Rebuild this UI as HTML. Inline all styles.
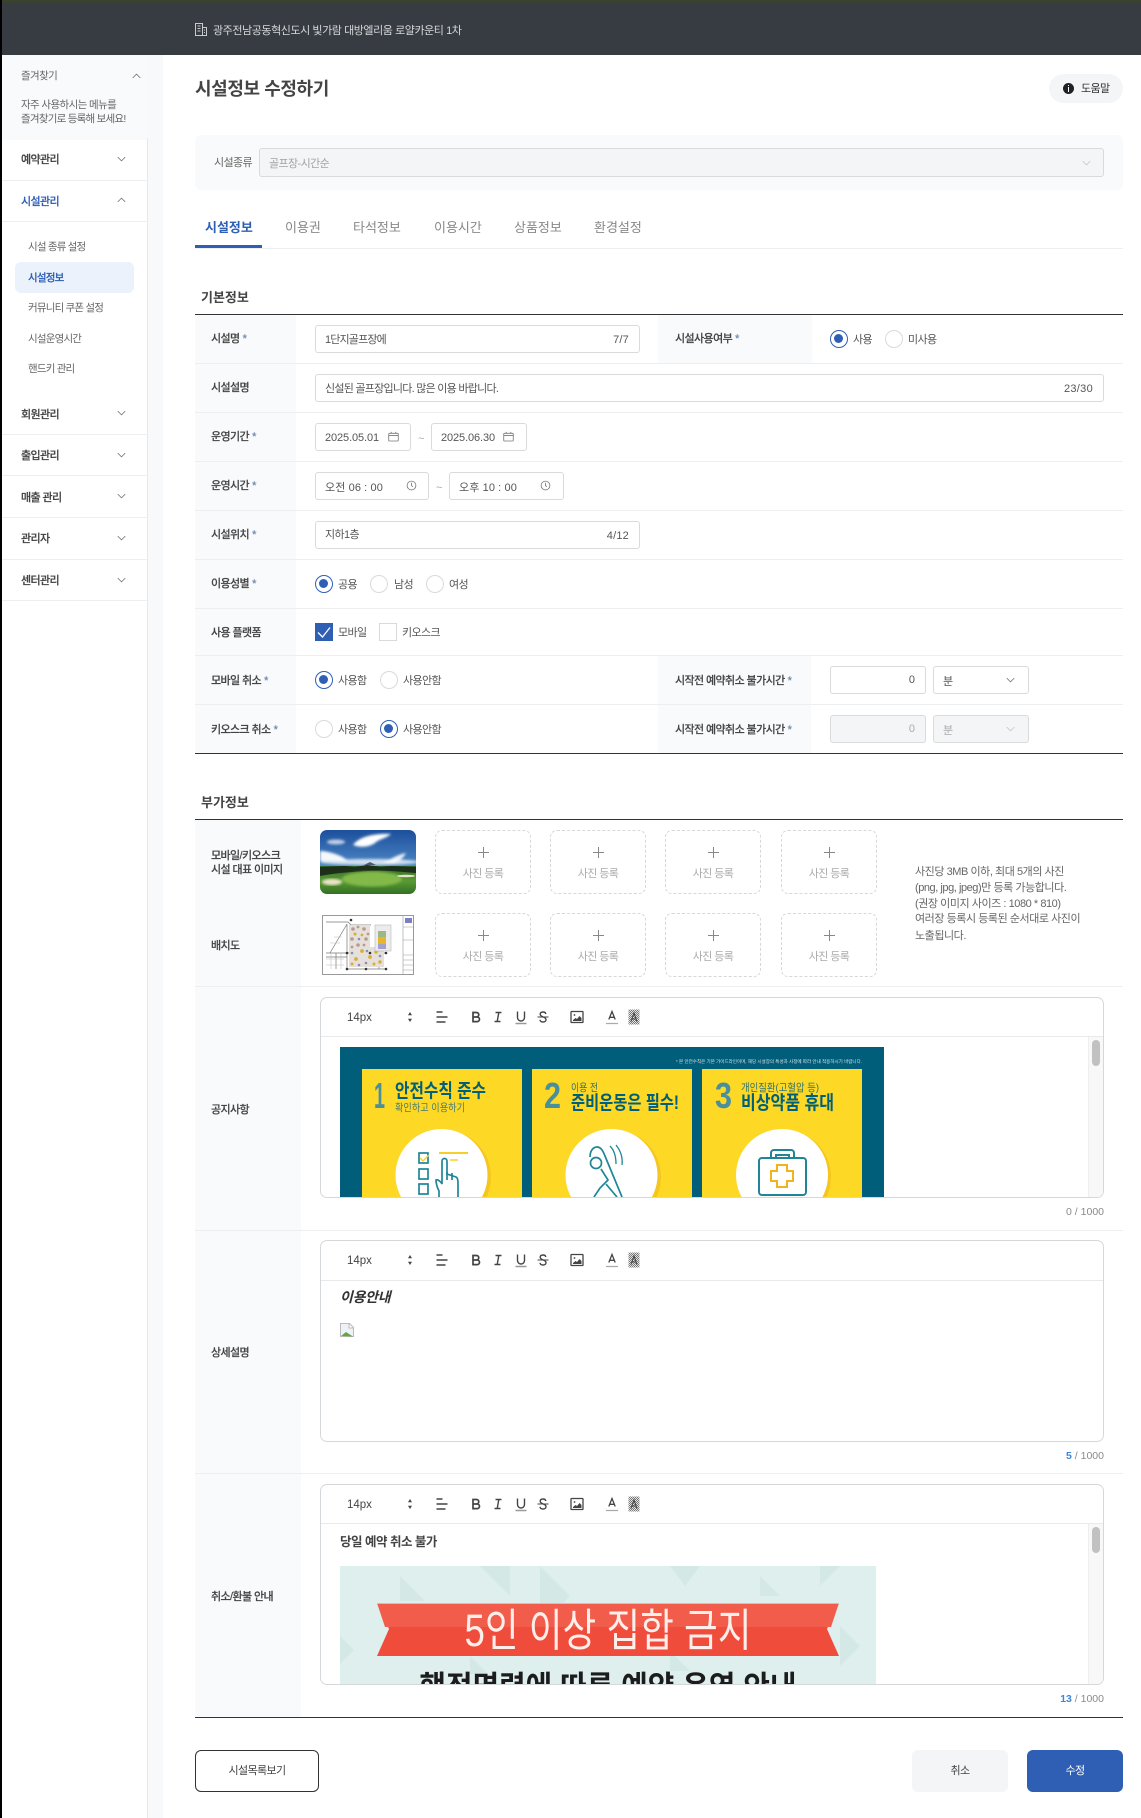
<!DOCTYPE html>
<html lang="ko"><head><meta charset="utf-8"><title>시설정보 수정하기</title>
<style>
html,body{margin:0;padding:0;background:#fff}
body{width:1141px;height:1818px;position:relative;overflow:hidden;font-family:"Liberation Sans","Noto Sans CJK KR",sans-serif;font-size:11px;color:#555;letter-spacing:-.6px;filter:blur(.3px)}
div,span,svg{position:absolute;box-sizing:border-box}
.t{height:20px;line-height:20px;white-space:nowrap;margin-top:1px}
.z{margin-top:0}
.r{text-align:right}
.lb{color:#444;font-weight:500;-webkit-text-stroke:.15px #444}
.lb i{color:#6f9ce0;font-style:normal;margin-left:3px}
.nav{color:#444;font-size:11px;font-weight:500;-webkit-text-stroke:.2px #444;left:21px}
.sub{color:#666;left:28px;font-size:10.5px;letter-spacing:-.8px}
.ln{height:1px;background:#eceeef}
.lc{background:#f8fafb}
.in{border:1px solid #d8dadc;border-radius:3px;background:#fff;height:28px}
.dis{background:#f3f5f6}
.ra{width:18px;height:18px;border-radius:50%;border:1px solid #d8dadc;background:#fff}
.on{border:1.5px solid #2f5fb5}
.on:after{content:"";position:absolute;left:3px;top:3px;width:9px;height:9px;border-radius:50%;background:#2f5fb5}
.tab{top:217px;color:#888;font-size:13px;letter-spacing:0}
.ph{width:96px;height:64px;border:1px dashed #d5d8da;border-radius:7px;background:#fff}
.ph b{position:absolute;left:0;right:0;top:33px;text-align:center;font-weight:400;color:#aaa;line-height:20px;font-size:11px}
.ph svg{left:41px;top:15px}
.ed{left:320px;width:784px;border:1px solid #d5d8da;border-radius:7px;background:#fff;overflow:hidden}
.tb{left:0;right:0;top:0;height:40px;border-bottom:1px solid #e8e9ea}
.tb span{top:10px;margin-top:0}
.tb svg{top:10px;width:18px;height:18px;fill:none;stroke:#444;stroke-width:1.4}
.cnt{color:#8a8a8a;font-size:10.5px;letter-spacing:0;margin-top:0}
.hp{color:#666;letter-spacing:-.45px}
</style></head><body>
<svg width="0" height="0" style="position:absolute">
<defs><pattern id="chk" width="2" height="2" patternUnits="userSpaceOnUse"><rect width="2" height="2" fill="#e4e4e4"/><rect width="1" height="1" fill="#777"/><rect x="1" y="1" width="1" height="1" fill="#777"/></pattern></defs>
<symbol id="cd" viewBox="0 0 12 7"><path d="M1 1l5 5 5-5" fill="none" stroke="#666" stroke-width="1"/></symbol>
<symbol id="cu" viewBox="0 0 12 7"><path d="M1 6l5-5 5 5" fill="none" stroke="#666" stroke-width="1"/></symbol>
<symbol id="cal" viewBox="0 0 12 12"><path d="M1.5 2.5h9a.7.7 0 0 1 .7.7v7a.7.7 0 0 1-.7.7h-9a.7.7 0 0 1-.7-.7v-7a.7.7 0 0 1 .7-.7zM.8 5h10.4M3.5 1v2M8.5 1v2" fill="none" stroke="#777" stroke-width=".9"/></symbol>
<symbol id="clk" viewBox="0 0 12 12"><circle cx="6" cy="6" r="4.8" fill="none" stroke="#777" stroke-width=".9"/><path d="M6 3v3.2l1.6 1" fill="none" stroke="#777" stroke-width=".9"/></symbol>
<symbol id="pl" viewBox="0 0 13 13"><path d="M6.5 1v11M1 6.5h11" fill="none" stroke="#888" stroke-width="1"/></symbol>
<symbol id="bB" viewBox="0 0 18 18"><path d="M6 4.5H9.5A2.2 2.2 0 0 1 9.5 9H6zM6 9H10.2A2.3 2.3 0 0 1 10.2 13.6H6z" stroke-width="1.7"/></symbol>
<symbol id="bI" viewBox="0 0 18 18"><path d="M6.5 4.5h6M5.5 13.5h6M9.8 4.5L8.2 13.5"/></symbol>
<symbol id="bU" viewBox="0 0 18 18"><path d="M5.5 3.5v6a3.5 3.5 0 0 0 7 0v-6"/><path d="M3.5 15.5h11" stroke="#999"/></symbol>
<symbol id="bS" viewBox="0 0 18 18"><path d="M3.5 9h11" stroke-width="1.1"/><path d="M11.8 6C11.6 4.6 10.5 4 9 4 7.3 4 6.2 4.9 6.2 6.3c0 1.4 1.3 2 2.8 2.6 1.7.6 3 1.2 3 2.7 0 1.4-1.2 2.4-3 2.4-1.6 0-2.8-.7-3-2.2"/></symbol>
<symbol id="bP" viewBox="0 0 18 18"><rect x="3" y="3.5" width="12" height="11" rx=".6" stroke-width="1.3"/><circle cx="6.5" cy="7" r=".9" fill="#444" stroke="none"/><path d="M5 13v-1l2.5-2 1.5 1 2.5-3 2 2v3z" fill="#444" stroke="none"/></symbol>
<symbol id="bA" viewBox="0 0 18 18"><path d="M5.8 11.5L9 3.5l3.2 8M6.8 9.3h4.4" stroke-width="1.3"/><path d="M3 15.5h12" stroke="#aaa" stroke-width="1.2"/></symbol>
<symbol id="bG" viewBox="0 0 18 18"><rect x="3.5" y="1.5" width="11" height="15" fill="url(#chk)" stroke="none"/><path d="M6 13.5L9 5l3 8.5M6.9 11h4.2" stroke-width="1.1"/></symbol>
<symbol id="bL" viewBox="0 0 18 18"><path d="M3.5 4h6M3.5 9h11M3.5 14h9"/></symbol>
<symbol id="bO" viewBox="0 0 18 18"><path d="M9 4L7 7.2h4zM9 14l-2-3.2h4z" fill="#444" stroke="none"/></symbol>
</svg>

<!-- top bar -->
<div style="left:0;top:0;width:1141px;height:55px;background:#373c42"></div>
<div style="left:0;top:0;width:1141px;height:3px;background:#39422f"></div>
<svg style="left:195px;top:23px" width="12" height="13" viewBox="0 0 12 13"><path d="M.5 12.5V.5h7v12M7.5 4.5h4v8M0 12.5h12M2.5 3h3M2.5 5.5h3M2.5 8h3M9 7h1M9 9.5h1" fill="none" stroke="#c9ccce"/></svg>
<div class="t" style="left:213px;top:20px;color:#d6d8da;letter-spacing:-.44px">광주전남공동혁신도시 빛가람 대방엘리움 로얄카운티 1차</div>

<!-- sidebar -->
<div style="left:2px;top:55px;width:160px;height:85px;background:#f8fafb"></div>
<div style="left:147px;top:55px;width:16px;height:1763px;background:#f8f9fa"></div>
<div style="left:147px;top:138px;width:1px;height:1680px;background:#e6e8ea"></div>
<div class="t z" style="left:21px;top:66px;color:#666;font-size:10.5px">즐겨찾기</div>
<svg style="left:132px;top:73px" width="9" height="6"><use href="#cu"/></svg>
<div class="t z" style="left:21px;top:95px;color:#666;font-size:10.5px">자주 사용하시는 메뉴를</div>
<div class="t" style="left:21px;top:108px;color:#666;font-size:10.5px;letter-spacing:-.75px">즐겨찾기로 등록해 보세요!</div>
<div class="t nav" style="top:149px">예약관리</div>
<div class="t nav" style="top:191px;color:#2f5fb5;-webkit-text-stroke-color:#2f5fb5">시설관리</div>
<div class="t sub" style="top:236px">시설 종류 설정</div>
<div style="left:15px;top:262px;width:119px;height:31px;border-radius:6px;background:#ebf2fc"></div>
<div class="t sub" style="top:267px;color:#2f5fb5;font-weight:500;-webkit-text-stroke:.2px #2f5fb5">시설정보</div>
<div class="t sub" style="top:297px">커뮤니티 쿠폰 설정</div>
<div class="t sub" style="top:328px">시설운영시간</div>
<div class="t sub" style="top:358px">핸드키 관리</div>
<div class="t nav" style="top:404px">회원관리</div>
<div class="t nav" style="top:445px">출입관리</div>
<div class="t nav" style="top:487px">매출 관리</div>
<div class="t nav" style="top:528px">관리자</div>
<div class="t nav" style="top:570px">센터관리</div>
<div class="ln" style="left:2px;top:180px;width:145px"></div>
<div class="ln" style="left:2px;top:221px;width:145px"></div>
<div class="ln" style="left:2px;top:434px;width:145px"></div>
<div class="ln" style="left:2px;top:475px;width:145px"></div>
<div class="ln" style="left:2px;top:517px;width:145px"></div>
<div class="ln" style="left:2px;top:559px;width:145px"></div>
<div class="ln" style="left:2px;top:600px;width:145px"></div>
<svg style="left:117px;top:156px" width="9" height="6"><use href="#cd"/></svg>
<svg style="left:117px;top:197px" width="9" height="6"><use href="#cu"/></svg>
<svg style="left:117px;top:410px" width="9" height="6"><use href="#cd"/></svg>
<svg style="left:117px;top:452px" width="9" height="6"><use href="#cd"/></svg>
<svg style="left:117px;top:493px" width="9" height="6"><use href="#cd"/></svg>
<svg style="left:117px;top:535px" width="9" height="6"><use href="#cd"/></svg>
<svg style="left:117px;top:577px" width="9" height="6"><use href="#cd"/></svg>
<div style="left:0;top:0;width:2px;height:1818px;background:#000"></div>

<!-- header -->
<div class="t" style="left:195px;top:78px;font-size:18px;font-weight:700;color:#444;letter-spacing:-.4px">시설정보 수정하기</div>
<div style="left:1049px;top:74px;width:74px;height:29px;border-radius:15px;background:#f3f5f6"></div>
<div style="left:1063px;top:83px;width:11px;height:11px;border-radius:50%;background:#1f2226"></div>
<div style="left:1068px;top:87px;width:1.4px;height:5px;background:#fff"></div>
<div style="left:1068px;top:85px;width:1.4px;height:1.3px;background:#fff"></div>
<div class="t" style="left:1081px;top:78px;color:#333">도움말</div>

<!-- facility type -->
<div style="left:195px;top:135px;width:928px;height:55px;border-radius:6px;background:#f8fafb"></div>
<div class="in dis" style="left:259px;top:148px;width:845px;height:29px"></div>
<div class="t" style="left:214px;top:152px;color:#666">시설종류</div>
<div class="t" style="left:269px;top:153px;color:#a0a3a6">골프장-시간순</div>
<svg style="left:1082px;top:160px" width="9" height="6"><use href="#cd" opacity=".35"/></svg>

<!-- tabs -->
<div class="t tab" style="left:205px;color:#2f5fb5;font-weight:700">시설정보</div>
<div class="t tab" style="left:285px">이용권</div>
<div class="t tab" style="left:353px">타석정보</div>
<div class="t tab" style="left:434px">이용시간</div>
<div class="t tab" style="left:514px">상품정보</div>
<div class="t tab" style="left:594px">환경설정</div>
<div class="ln" style="left:195px;top:248px;width:928px"></div>
<div style="left:195px;top:245px;width:67px;height:3px;background:#2f5fb5"></div>

<!-- basic info -->
<div class="t" style="left:201px;top:287px;font-size:13px;font-weight:700;color:#444;letter-spacing:0">기본정보</div>
<div class="lc" style="left:195px;top:315px;width:101px;height:438px"></div>
<div class="lc" style="left:658px;top:315px;width:154px;height:48px"></div>
<div class="lc" style="left:658px;top:656px;width:153px;height:97px"></div>
<div class="ln" style="left:195px;top:363px;width:928px"></div>
<div class="ln" style="left:195px;top:412px;width:928px"></div>
<div class="ln" style="left:195px;top:461px;width:928px"></div>
<div class="ln" style="left:195px;top:510px;width:928px"></div>
<div class="ln" style="left:195px;top:559px;width:928px"></div>
<div class="ln" style="left:195px;top:608px;width:928px"></div>
<div class="ln" style="left:195px;top:655px;width:928px"></div>
<div class="ln" style="left:195px;top:704px;width:928px"></div>
<div style="left:195px;top:314px;width:928px;height:1px;background:#333"></div>
<div style="left:195px;top:753px;width:928px;height:1px;background:#333"></div>

<div class="t lb" style="left:211px;top:328px">시설명<i>*</i></div>
<div class="t lb" style="left:211px;top:377px">시설설명</div>
<div class="t lb" style="left:211px;top:426px">운영기간<i>*</i></div>
<div class="t lb" style="left:211px;top:475px">운영시간<i>*</i></div>
<div class="t lb" style="left:211px;top:524px">시설위치<i>*</i></div>
<div class="t lb" style="left:211px;top:573px">이용성별<i>*</i></div>
<div class="t lb" style="left:211px;top:622px">사용 플랫폼</div>
<div class="t lb" style="left:211px;top:670px">모바일 취소<i>*</i></div>
<div class="t lb" style="left:211px;top:719px">키오스크 취소<i>*</i></div>
<div class="t lb" style="left:675px;top:328px">시설사용여부<i>*</i></div>
<div class="t lb" style="left:675px;top:670px">시작전 예약취소 불가시간<i>*</i></div>
<div class="t lb" style="left:675px;top:719px">시작전 예약취소 불가시간<i>*</i></div>

<div class="in" style="left:315px;top:325px;width:325px"></div>
<div class="t" style="left:325px;top:329px;letter-spacing:-.85px">1단지골프장에</div>
<div class="t r" style="right:512px;top:329px;letter-spacing:.2px">7/7</div>
<div class="ra on" style="left:830px;top:330px"></div><div class="t" style="left:853px;top:329px">사용</div>
<div class="ra" style="left:885px;top:330px"></div><div class="t" style="left:908px;top:329px">미사용</div>

<div class="in" style="left:315px;top:374px;width:789px"></div>
<div class="t" style="left:325px;top:378px;letter-spacing:-.75px">신설된 골프장입니다. 많은 이용 바랍니다.</div>
<div class="t r" style="right:48px;top:378px;letter-spacing:.3px">23/30</div>

<div class="in" style="left:315px;top:423px;width:96px"></div>
<div class="t" style="left:325px;top:427px;letter-spacing:-.1px">2025.05.01</div>
<svg style="left:388px;top:431px" width="11" height="11"><use href="#cal"/></svg>
<div class="t" style="left:418px;top:428px;color:#aaa">~</div>
<div class="in" style="left:431px;top:423px;width:96px"></div>
<div class="t" style="left:441px;top:427px;letter-spacing:-.1px">2025.06.30</div>
<svg style="left:503px;top:431px" width="11" height="11"><use href="#cal"/></svg>

<div class="in" style="left:315px;top:472px;width:114px"></div>
<div class="t" style="left:325px;top:477px;letter-spacing:.1px">오전 06 : 00</div>
<svg style="left:406px;top:480px" width="11" height="11"><use href="#clk"/></svg>
<div class="t" style="left:436px;top:477px;color:#aaa">~</div>
<div class="in" style="left:449px;top:472px;width:115px"></div>
<div class="t" style="left:459px;top:477px;letter-spacing:.1px">오후 10 : 00</div>
<svg style="left:540px;top:480px" width="11" height="11"><use href="#clk"/></svg>

<div class="in" style="left:315px;top:521px;width:325px"></div>
<div class="t" style="left:325px;top:524px">지하1층</div>
<div class="t r" style="right:512px;top:525px;letter-spacing:.2px">4/12</div>

<div class="ra on" style="left:315px;top:575px"></div><div class="t" style="left:338px;top:574px">공용</div>
<div class="ra" style="left:370px;top:575px"></div><div class="t" style="left:394px;top:574px">남성</div>
<div class="ra" style="left:426px;top:575px"></div><div class="t" style="left:449px;top:574px">여성</div>

<div style="left:315px;top:623px;width:18px;height:18px;background:#2f5fb5"></div>
<svg style="left:315px;top:623px" width="18" height="18"><path d="M3 9.5l4.5 4.5L15 4.5" fill="none" stroke="#fff" stroke-width="1.3"/></svg>
<div class="t" style="left:338px;top:622px">모바일</div>
<div style="left:379px;top:623px;width:18px;height:18px;border:1px solid #d8dadc"></div>
<div class="t" style="left:402px;top:622px">키오스크</div>

<div class="ra on" style="left:315px;top:671px"></div><div class="t" style="left:338px;top:670px">사용함</div>
<div class="ra" style="left:380px;top:671px"></div><div class="t" style="left:403px;top:670px">사용안함</div>
<div class="ra" style="left:315px;top:720px"></div><div class="t" style="left:338px;top:719px">사용함</div>
<div class="ra on" style="left:380px;top:720px"></div><div class="t" style="left:403px;top:719px">사용안함</div>

<div class="in" style="left:830px;top:666px;width:96px"></div>
<div class="t r" style="right:226px;top:669px;letter-spacing:0">0</div>
<div class="in" style="left:933px;top:666px;width:96px"></div>
<div class="t" style="left:943px;top:671px">분</div>
<svg style="left:1006px;top:677px" width="9" height="6"><use href="#cd"/></svg>
<div class="in dis" style="left:830px;top:715px;width:96px"></div>
<div class="t r" style="right:226px;top:718px;letter-spacing:0;color:#aaa">0</div>
<div class="in dis" style="left:933px;top:715px;width:96px"></div>
<div class="t" style="left:943px;top:720px;color:#aaa">분</div>
<svg style="left:1006px;top:726px" width="9" height="6"><use href="#cd" opacity=".35"/></svg>

<!-- additional -->
<div class="t" style="left:201px;top:792px;font-size:13px;font-weight:700;color:#444;letter-spacing:0">부가정보</div>
<div class="lc" style="left:195px;top:820px;width:106px;height:897px"></div>
<div class="ln" style="left:195px;top:986px;width:928px"></div>
<div class="ln" style="left:195px;top:1230px;width:928px"></div>
<div class="ln" style="left:195px;top:1473px;width:928px"></div>
<div style="left:195px;top:819px;width:928px;height:1px;background:#333"></div>
<div style="left:195px;top:1717px;width:928px;height:1px;background:#333"></div>

<div class="t lb" style="left:211px;top:845px">모바일/키오스크</div>
<div class="t lb" style="left:211px;top:859px">시설 대표 이미지</div>
<div class="t lb" style="left:211px;top:935px">배치도</div>
<div class="t lb" style="left:211px;top:1099px">공지사항</div>
<div class="t lb" style="left:211px;top:1342px">상세설명</div>
<div class="t lb" style="left:211px;top:1586px">취소/환불 안내</div>

<!-- golf photo -->
<svg style="left:320px;top:830px;border-radius:7px" width="96" height="64" viewBox="0 0 96 64">
<defs><linearGradient id="sky" x1="0" y1="0" x2="0" y2="1"><stop offset="0" stop-color="#1d4f9c"/><stop offset=".6" stop-color="#4f8bc8"/><stop offset="1" stop-color="#cfdfe8"/></linearGradient>
<linearGradient id="gr" x1="0" y1="0" x2="0" y2="1"><stop offset="0" stop-color="#2f6a26"/><stop offset=".5" stop-color="#5a9a35"/><stop offset="1" stop-color="#2c6a20"/></linearGradient>
<filter id="bl"><feGaussianBlur stdDeviation="1.3"/></filter></defs>
<rect width="96" height="64" fill="url(#sky)"/>
<g filter="url(#bl)" fill="#fff">
<path d="M33 15c5-7 18-12 38-11-4 4-12 5-16 9-6 4-14 5-22 2z"/>
<ellipse cx="16" cy="12" rx="9" ry="2.5" opacity=".7"/>
<path d="M0 21c8 0 22 4 28 10H0z" opacity=".95"/>
<path d="M62 33c8-3 14-8 24-10-2 4-6 8-12 10z" opacity=".9"/>
<ellipse cx="50" cy="32" rx="50" ry="3" opacity=".75"/>
</g>
<path d="M44 35l6-3 6 3z" fill="#4c5d6a"/>
<rect y="36" width="96" height="30" fill="url(#gr)"/>
<path d="M0 37l25-1 10 1 12-2 14 2 10-1 25 1v6c-12-1-30-3-46-2C30 42 15 43 0 46z" fill="#1d2f1b"/>
<ellipse cx="52" cy="49" rx="30" ry="7.5" fill="#82b948" filter="url(#bl)"/>
<ellipse cx="12" cy="52" rx="10" ry="3.2" fill="#e9e3c6" filter="url(#bl)"/>
<ellipse cx="86" cy="46" rx="9" ry="1.2" fill="#e9e3c6"/>
</svg>

<!-- site plan -->
<svg style="left:322px;top:915px" width="92" height="60" viewBox="0 0 92 60">
<rect x=".5" y=".5" width="91" height="59" fill="#fff" stroke="#999"/>
<path d="M81 0v60M81 40h11M81 12h11M81 25h11M81 45h11M81 50h11M81 55h11" stroke="#999" fill="none" stroke-width=".6"/>
<rect x="83" y="3" width="7" height="5" fill="#7c7fc4"/>
<path d="M4 7h22l3 3h20M25 9L8 38M4 38h60M25 9v45M57 32v22M25 54h40M4 42h21M14 38v16" stroke="#777" fill="none" stroke-width=".7"/>
<path d="M4 44h18M4 50h18M9 38v16M19 38v16M8 28h10M12 22h8" stroke="#bbb" fill="none" stroke-width=".5"/>
<path d="M27 10h21v22h14v20H27z" fill="#e6e0dc"/>
<g fill="#b89a90"><circle cx="31" cy="14" r="1.8"/><circle cx="42" cy="14" r="1.8"/><circle cx="30" cy="24" r="1.8"/><circle cx="44" cy="24" r="1.8"/><circle cx="36" cy="30" r="1.8"/><circle cx="36" cy="12" r="1.4"/><circle cx="46" cy="19" r="1.4"/><circle cx="30" cy="32" r="1.4"/><circle cx="42" cy="30" r="1.4"/></g>
<g fill="#d9ae36"><circle cx="33" cy="19" r="1.5"/><circle cx="40" cy="20" r="1.4"/><circle cx="40" cy="36" r="1.9"/><circle cx="48" cy="42" r="1.9"/><circle cx="34" cy="44" r="1.9"/><circle cx="54" cy="37" r="1.7"/><circle cx="58" cy="47" r="1.7"/><circle cx="30" cy="49" r="1.5"/><circle cx="52" cy="49" r="1.5"/></g>
<g fill="#8a8db0"><circle cx="37" cy="24" r="1.3"/><circle cx="30" cy="38" r="1.3"/><circle cx="44" cy="48" r="1.3"/><circle cx="45" cy="36" r="1.3"/><circle cx="58" cy="41" r="1.3"/><circle cx="37" cy="50" r="1.3"/></g>
<g fill="#333"><circle cx="25" cy="38" r="1.3"/><circle cx="48" cy="38" r="1.3"/><circle cx="64" cy="38" r="1.3"/><circle cx="25" cy="54" r="1.3"/><circle cx="44" cy="54" r="1.3"/><circle cx="64" cy="54" r="1.3"/><circle cx="29" cy="5" r="1.3"/></g>
<rect x="53" y="10" width="16" height="26" fill="#ececec" stroke="#aaa" stroke-width=".5"/>
<rect x="56" y="16" width="8" height="6" fill="#9cb885"/><rect x="56" y="22" width="8" height="7" fill="#e6b72e"/><rect x="56" y="29" width="8" height="5" fill="#a2a2cc"/>
</svg>

<!-- placeholders -->
<div class="ph" style="left:435px;top:830px"><svg width="13" height="13"><use href="#pl"/></svg><b>사진 등록</b></div>
<div class="ph" style="left:550px;top:830px"><svg width="13" height="13"><use href="#pl"/></svg><b>사진 등록</b></div>
<div class="ph" style="left:665px;top:830px"><svg width="13" height="13"><use href="#pl"/></svg><b>사진 등록</b></div>
<div class="ph" style="left:781px;top:830px"><svg width="13" height="13"><use href="#pl"/></svg><b>사진 등록</b></div>
<div class="ph" style="left:435px;top:913px"><svg width="13" height="13"><use href="#pl"/></svg><b>사진 등록</b></div>
<div class="ph" style="left:550px;top:913px"><svg width="13" height="13"><use href="#pl"/></svg><b>사진 등록</b></div>
<div class="ph" style="left:665px;top:913px"><svg width="13" height="13"><use href="#pl"/></svg><b>사진 등록</b></div>
<div class="ph" style="left:781px;top:913px"><svg width="13" height="13"><use href="#pl"/></svg><b>사진 등록</b></div>

<div class="t hp" style="left:915px;top:861px">사진당 3MB 이하, 최대 5개의 사진</div>
<div class="t hp" style="left:915px;top:877px">(png, jpg, jpeg)만 등록 가능합니다.</div>
<div class="t hp" style="left:915px;top:893px">(권장 이미지 사이즈 : 1080 * 810)</div>
<div class="t hp" style="left:915px;top:908px">여러장 등록시 등록된 순서대로 사진이</div>
<div class="t hp" style="left:915px;top:925px">노출됩니다.</div>

<!-- editor 1 -->
<div class="ed" style="top:997px;height:201px">
<div class="tb" style="height:39px"><span class="t" style="left:26px;font-size:11.5px;color:#444;letter-spacing:0;top:10px">14px</span>
<svg style="left:80px"><use href="#bO"/></svg><svg style="left:112px"><use href="#bL"/></svg><svg style="left:146px"><use href="#bB"/></svg><svg style="left:168px"><use href="#bI"/></svg><svg style="left:191px"><use href="#bU"/></svg><svg style="left:213px"><use href="#bS"/></svg><svg style="left:247px"><use href="#bP"/></svg><svg style="left:282px"><use href="#bA"/></svg><svg style="left:304px"><use href="#bG"/></svg></div>
<svg style="left:19px;top:49px" width="544" height="150" viewBox="0 0 544 150">
<rect width="544" height="150" fill="#005e7b"/>
<text x="522" y="16" text-anchor="end" font-size="4.6" fill="#d8e4e8" textLength="186" lengthAdjust="spacingAndGlyphs" font-family="Liberation Sans,Noto Sans CJK KR,sans-serif" letter-spacing="0">* 본 안전수칙은 기본 가이드라인이며, 해당 시설장의 특성과 사정에 따라 안내 적용하시기 바랍니다.</text>
<rect x="22" y="22" width="160" height="130" fill="#fdd825"/><rect x="192" y="22" width="160" height="130" fill="#fdd825"/><rect x="362" y="22" width="160" height="130" fill="#fdd825"/>
<circle cx="104" cy="130" r="47" fill="#f1bf1c" opacity=".7"/><circle cx="274" cy="130" r="47" fill="#f1bf1c" opacity=".7"/><circle cx="444" cy="130" r="47" fill="#f1bf1c" opacity=".7"/>
<circle cx="101.5" cy="128" r="46" fill="#fff"/><circle cx="271.5" cy="128" r="46" fill="#fff"/><circle cx="442" cy="128" r="46" fill="#fff"/>
<g font-family="Liberation Sans,Noto Sans CJK KR,sans-serif" letter-spacing="0" lengthAdjust="spacingAndGlyphs">
<text x="34" y="61" font-size="36" font-weight="700" fill="#4a8f9c" textLength="11" lengthAdjust="spacingAndGlyphs">1</text>
<text x="55" y="50" font-size="19" font-weight="700" fill="#006079" textLength="91" lengthAdjust="spacingAndGlyphs">안전수칙 준수</text>
<text x="55" y="64" font-size="10.5" fill="#4a7a70" textLength="70" lengthAdjust="spacingAndGlyphs">확인하고 이용하기</text>
<text x="204" y="61" font-size="36" font-weight="700" fill="#4a8f9c" textLength="17" lengthAdjust="spacingAndGlyphs">2</text>
<text x="231" y="44" font-size="10.5" fill="#33706c" textLength="27" lengthAdjust="spacingAndGlyphs">이용 전</text>
<text x="231" y="62" font-size="19" font-weight="700" fill="#006079" textLength="108" lengthAdjust="spacingAndGlyphs">준비운동은 필수!</text>
<text x="375" y="61" font-size="36" font-weight="700" fill="#4a8f9c" textLength="17" lengthAdjust="spacingAndGlyphs">3</text>
<text x="401" y="44" font-size="10.5" fill="#33706c" textLength="78" lengthAdjust="spacingAndGlyphs">개인질환(고혈압 등)</text>
<text x="401" y="62" font-size="19" font-weight="700" fill="#006079" textLength="93" lengthAdjust="spacingAndGlyphs">비상약품 휴대</text>
</g>
<g fill="none" stroke="#1f8597" stroke-width="1.7">
<rect x="79" y="106" width="9" height="10"/><rect x="79" y="122" width="9" height="10"/><rect x="79" y="137" width="9" height="10"/>
<path d="M99 150v-6c-2-4-3-7-3-11 2-1 5 2 6 4v-23a2.5 2.5 0 0 1 5 0v13l9 3c2 1 2 4 2 8v12"/><path d="M107 125v8M112 126v7"/>
<circle cx="256" cy="116" r="5.5"/>
<path d="M250 110c0-6 3-10 7-10 4 0 6 4 8 9l17 41M261 122l7 11-8 8-6 9M266 137l11 13"/>
<path d="M270 99c4 4 6 10 6 18M276 98c4 5 7 12 6 20" stroke-width="1.3"/></g>
<path d="M99 106h29" stroke="#f6cf2b" stroke-width="2" fill="none"/><path d="M110 113h8" stroke="#f6cf2b" stroke-width="1.6" fill="none"/>
<path d="M80 111l3 3 6-6" stroke="#f6cf2b" stroke-width="1.4" fill="none"/>
<g fill="none" stroke="#1f8597" stroke-width="2"><rect x="419" y="111" width="47" height="37" rx="3"/><path d="M431 111v-5a3 3 0 0 1 3-3h17a3 3 0 0 1 3 3v5M436 111v-3h13v3"/></g>
<path d="M437 118h10v6h6v10h-6v6h-10v-6h-6v-10h6z" fill="#fff" stroke="#f2b41c" stroke-width="2"/>
</svg>
<div style="left:767px;top:39px;width:16px;height:162px;background:#f8f8f8;border-left:1px solid #eee"></div>
<div style="left:771px;top:42px;width:8px;height:26px;border-radius:4px;background:#c1c1c1"></div>
</div>
<div class="t r cnt" style="right:37px;top:1202px">0 / 1000</div>

<!-- editor 2 -->
<div class="ed" style="top:1240px;height:202px">
<div class="tb"><span class="t" style="left:26px;font-size:11.5px;color:#444;letter-spacing:0;top:10px">14px</span>
<svg style="left:80px"><use href="#bO"/></svg><svg style="left:112px"><use href="#bL"/></svg><svg style="left:146px"><use href="#bB"/></svg><svg style="left:168px"><use href="#bI"/></svg><svg style="left:191px"><use href="#bU"/></svg><svg style="left:213px"><use href="#bS"/></svg><svg style="left:247px"><use href="#bP"/></svg><svg style="left:282px"><use href="#bA"/></svg><svg style="left:304px"><use href="#bG"/></svg></div>
<div class="t z" style="left:19px;top:46px;font-size:14px;font-weight:700;font-style:italic;color:#333;letter-spacing:-.3px">이용안내</div>
<svg style="left:19px;top:82px" width="14" height="14" viewBox="0 0 14 14"><path d="M.5.5h9l4 4v9H.5z" fill="#eef2f8" stroke="#bbb"/><path d="M1 13l5-4 3 2 4 2.5z" fill="#5ea83f"/><path d="M9 1v4h4" fill="#fff" stroke="#bbb"/></svg>
</div>
<div class="t r cnt" style="right:37px;top:1446px"><span style="position:static;color:#3f85d8;font-weight:700">5</span> / 1000</div>

<!-- editor 3 -->
<div class="ed" style="top:1484px;height:201px">
<div class="tb" style="height:39px"><span class="t" style="left:26px;font-size:11.5px;color:#444;letter-spacing:0;top:10px">14px</span>
<svg style="left:80px"><use href="#bO"/></svg><svg style="left:112px"><use href="#bL"/></svg><svg style="left:146px"><use href="#bB"/></svg><svg style="left:168px"><use href="#bI"/></svg><svg style="left:191px"><use href="#bU"/></svg><svg style="left:213px"><use href="#bS"/></svg><svg style="left:247px"><use href="#bP"/></svg><svg style="left:282px"><use href="#bA"/></svg><svg style="left:304px"><use href="#bG"/></svg></div>
<div class="t z" style="left:19px;top:47px;font-size:12.5px;font-weight:700;color:#444;letter-spacing:-.5px">당일 예약 취소 불가</div>
<svg style="left:19px;top:81px" width="536" height="119" viewBox="0 0 536 119">
<rect width="536" height="119" fill="#dfefed"/>
<path d="M140 0l30 30v-30zM200 0l30 30-30 30zM330 0l30 0-15 20zM420 10l20 20h-20zM60 10l25 25H60zM480 0v20l20-20zM0 70l14 14-14 14zM500 60l20 20-20 20zM130 90l18 18h-18zM330 85l20 20h-20z" fill="#d4e9e6"/>
<path d="M37 37h462l-12 26 12 27H37l12-27z" fill="#ef4c3c"/>
<path d="M37 37h462l-8 24H45z" fill="#f15c4b"/>
<path d="M37 37h462v1H37z" fill="#f8b0a4"/>
<text x="268" y="80" text-anchor="middle" font-size="45" fill="#ffeeea" textLength="287" lengthAdjust="spacingAndGlyphs" font-family="Liberation Sans,Noto Sans CJK KR,sans-serif" letter-spacing="0">5인 이상 집합 금지</text>
<text x="268" y="132" text-anchor="middle" font-size="31" font-weight="700" fill="#1c1c1c" textLength="377" lengthAdjust="spacingAndGlyphs" font-family="Liberation Sans,Noto Sans CJK KR,sans-serif" letter-spacing="0">행정명령에 따른 예약 운영 안내</text>
</svg>
<div style="left:767px;top:39px;width:16px;height:162px;background:#f8f8f8;border-left:1px solid #eee"></div>
<div style="left:771px;top:42px;width:8px;height:26px;border-radius:4px;background:#c1c1c1"></div>
</div>
<div class="t r cnt" style="right:37px;top:1689px"><span style="position:static;color:#3f85d8;font-weight:700">13</span> / 1000</div>

<!-- buttons -->
<div style="left:195px;top:1750px;width:124px;height:42px;border:1px solid #333;border-radius:6px;background:#fff"></div>
<div class="t z" style="left:195px;top:1761px;width:124px;text-align:center;color:#444">시설목록보기</div>
<div style="left:912px;top:1750px;width:96px;height:42px;border-radius:6px;background:#f3f5f6"></div>
<div class="t z" style="left:912px;top:1761px;width:96px;text-align:center;color:#444">취소</div>
<div style="left:1027px;top:1750px;width:96px;height:42px;border-radius:6px;background:#2f5fb5"></div>
<div class="t z" style="left:1027px;top:1761px;width:96px;text-align:center;color:#fff">수정</div>
</body></html>
